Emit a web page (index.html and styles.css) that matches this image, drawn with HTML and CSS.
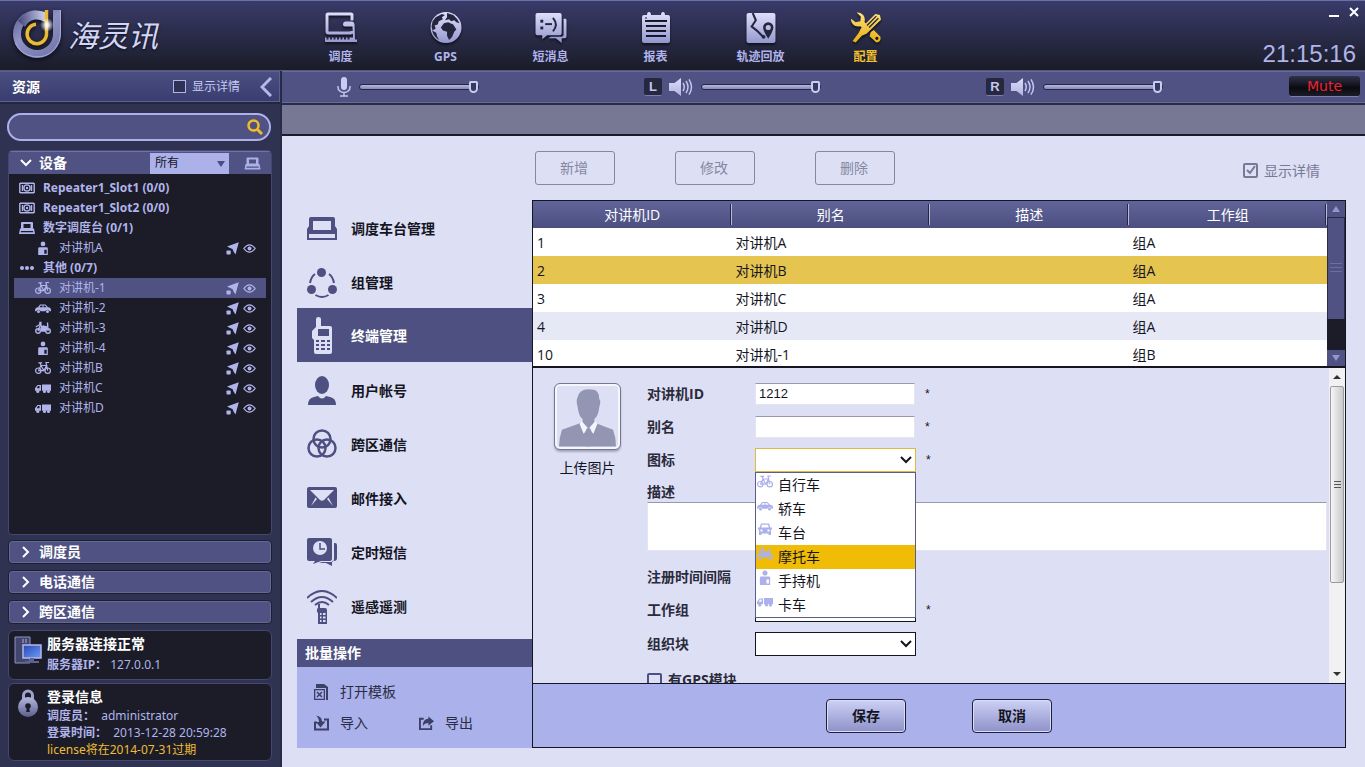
FILE: index.html
```html
<!DOCTYPE html>
<html lang="zh-CN">
<head>
<meta charset="utf-8">
<title>海灵讯</title>
<link rel="stylesheet" href="styles.css">
</head>
<body>
<svg class="sprite" aria-hidden="true">
  <defs>
    <linearGradient id="silver" gradientUnits="userSpaceOnUse" x1="0" y1="0" x2="0" y2="30"><stop offset="0" stop-color="#dfe1fc"/><stop offset="1" stop-color="#9598cf"/></linearGradient>
    <linearGradient id="gold" gradientUnits="userSpaceOnUse" x1="0" y1="0" x2="0" y2="30"><stop offset="0" stop-color="#ffe27a"/><stop offset="1" stop-color="#e8ad14"/></linearGradient>
    <linearGradient id="ring" gradientUnits="userSpaceOnUse" x1="6" y1="2" x2="36" y2="48"><stop offset="0" stop-color="#5d6196"/><stop offset=".45" stop-color="#8f93c4"/><stop offset="1" stop-color="#7377ac"/></linearGradient>
    <linearGradient id="swirl" gradientUnits="userSpaceOnUse" x1="8" y1="14" x2="36" y2="10"><stop offset="0" stop-color="#4a4d80"/><stop offset="1" stop-color="#d9dcf8"/></linearGradient>
    <radialGradient id="spark"><stop offset="0" stop-color="#fff"/><stop offset=".3" stop-color="#fff" stop-opacity=".8"/><stop offset="1" stop-color="#fff" stop-opacity="0"/></radialGradient>
    <linearGradient id="screen" x1="0" y1="0" x2="1" y2="1"><stop offset="0" stop-color="#2446b8"/><stop offset="1" stop-color="#6f9cf5"/></linearGradient>
    <linearGradient id="metal" x1="0" y1="0" x2="0" y2="1"><stop offset="0" stop-color="#b4b7df"/><stop offset="1" stop-color="#5c5f8c"/></linearGradient>
  </defs>
  <symbol id="i-bike" viewBox="0 0 16 14"><g fill="none" stroke="currentColor" stroke-width="1.2"><circle cx="3.3" cy="9.7" r="2.7"/><circle cx="12.7" cy="9.7" r="2.7"/><path d="M3.3 9.7 6 4.5 8.8 9.7H3.3M8.8 9.7 11.6 4.5H6L5 1.8M3.4 1.8h3.8M12.7 9.7 11 1.5h3"/></g></symbol>
  <symbol id="i-car" viewBox="0 0 16 14"><path fill="currentColor" fill-rule="evenodd" d="M0 9.5C0 7.5 1 6.5 3 6.2L5 3.5h5.5L13 6.2c2 .2 3 1.2 3 2.8v1.3h-1.3a2.3 2.3 0 0 0-4.4 0H5.7a2.3 2.3 0 0 0-4.4 0H0zM4.5 6.2h3V4.5H5.7zM8.5 4.5v1.7h3L10 4.5z"/><circle cx="3.5" cy="10.5" r="1.5" fill="currentColor"/><circle cx="12.5" cy="10.5" r="1.5" fill="currentColor"/></symbol>
  <symbol id="i-moto" viewBox="0 0 16 14"><g fill="none" stroke="currentColor" stroke-width="1.4"><circle cx="3" cy="10" r="2.3"/><circle cx="13" cy="10" r="2.3"/><path d="M3 10 5.2 4.5M13 10 12.500 1.500M4.500 2.200 7 6M.8 6l4-2.500"/></g><path fill="currentColor" d="M5.500 6.500 8 4.300l4 1 .5 2-2 3.500H6.200L5.200 8zM4 .8h2.600v3H5z"/></symbol>
  <symbol id="i-person" viewBox="0 0 16 16"><circle cx="8" cy="3.3" r="2.7" fill="currentColor"/><path fill="currentColor" fill-rule="evenodd" d="M2.500 8.500Q2.500 7 4 7h8q1.500 0 1.500 1.500V16h-11zM9.500 10v4.500h2.700V10z"/></symbol>
  <symbol id="i-truck" viewBox="0 0 16 14"><path fill="currentColor" fill-rule="evenodd" d="M7 3.500h9v6.300H7zM2.500 4H6v5.800H0V7.200zM3 5 1.800 7.200h2.700V5z"/><circle cx="2.800" cy="10.500" r="1.600" fill="currentColor"/><circle cx="9.500" cy="10.500" r="1.600" fill="currentColor"/><circle cx="13.500" cy="10.500" r="1.600" fill="currentColor"/></symbol>
  <symbol id="i-van" viewBox="0 0 16 14"><path fill="currentColor" fill-rule="evenodd" d="M4 1h8l1.300 4H15v2h-1v5.500h-2.500V11h-7v1.500H2V7H1V5h1.700zM5 2.300 4.200 5h7.600L11 2.300zM3.500 7v2h2V7zM10.500 7v2h2V7z"/></symbol>
  <symbol id="i-arrow" viewBox="0 0 13 13"><path fill="currentColor" d="M12.800.2 9.500 12.500 7.500 9.500 6.500 7 4 6 1 4.500z"/><rect x=".5" y="8.500" width="4.200" height="4" rx=".7" fill="currentColor"/></symbol>
  <symbol id="i-eye" viewBox="0 0 13 11"><path fill="none" stroke="currentColor" stroke-width="1.200" d="M.8 5.500Q6.500-1.800 12.200 5.500 6.500 12.800.8 5.500z"/><circle cx="6.500" cy="5.500" r="2" fill="currentColor"/></symbol>
  <symbol id="i-repeater" viewBox="0 0 16 12"><path fill="none" stroke="currentColor" stroke-width="1.400" d="M1 1.200h14M1 10.800h14M.8 1v10M15.200 1v10M3.500 3v6M12.500 3v6"/><circle cx="8" cy="6" r="3.100" fill="none" stroke="currentColor" stroke-width="1.400"/><circle cx="8" cy="6" r="1.200" fill="currentColor"/></symbol>
  <symbol id="i-console" viewBox="0 0 16 13"><path fill="currentColor" fill-rule="evenodd" d="M3 .5h10q1 0 1 1V7h1l1 5.500H0L1 7h1V1.500q0-1 1-1zM4.500 2.500v4h7v-4zM2 9.500l-.3 1.300h12.600L14 9.500z"/></symbol>
  <symbol id="i-chev" viewBox="0 0 12 8"><path fill="none" stroke="currentColor" stroke-width="2" d="m1 1 5 5 5-5"/></symbol>
  <symbol id="i-speaker" viewBox="0 0 24 20"><path fill="url(#silver)" d="M0 6h5.500L12 1v18l-6.500-5H0z"/><path fill="none" stroke="#c3c6ee" stroke-width="1.500" d="M14 6q2.500 4 0 8M17 4q4 6 0 12M20 2.300q5 7.700 0 15.400"/></symbol>
</svg>

<header class="topbar">
  <div class="brand">
    <svg class="brand-mark" viewBox="0 0 50 50" aria-hidden="true">
      <path fill="none" stroke="url(#ring)" stroke-width="8" d="M45 1V25A20 20 0 1 1 24 5"/>
      <path fill="url(#swirl)" d="M6 12C14 1 24 0 33 3v10c-7-4-15-4-20 5z"/>
      <path fill="none" stroke="#a8abd6" stroke-width="1" d="M48.500 1v24a23.500 23.500 0 0 1-45 9"/>
      <path fill="none" stroke="#e9b931" stroke-width="3.500" d="M34.500 1v24A9.700 9.700 0 1 1 24 15.300"/>
      <circle cx="35" cy="16" r="7" fill="url(#spark)"/>
    </svg>
    <span class="brand-name">海灵讯</span>
  </div>
  <nav class="nav">
    <a class="nav-item" href="#dispatch"><svg class="nav-icon" viewBox="0 0 32 30"><g fill="none" stroke="url(#silver)" stroke-width="3"><path d="M27 8V2.500Q27 1.500 26 1.500H3Q2 1.500 2 2.500V19q0 1.500 1.500 1.500h22q1.500 0 1.500-2"/></g><path fill="url(#silver)" d="M18 12q0-3 3-3h6q2 0 2.500 3L30 27h2v2.500H0V25h1.500v2h2v-2H5v2h2v-2h1.500v2h2v-2H12v2h2v-2h1.500v2h2v-2H19v2h2v-2h1.500v2h2v-2H28l-.5-11H21q-3 0-3-2z"/></svg>调度</a>
    <a class="nav-item" href="#gps"><svg class="nav-icon" viewBox="0 0 30 30"><circle cx="15" cy="15" r="15" fill="url(#silver)"/><g fill="#24263e"><path d="M2 9 5 5l6-3 3 1-3 2 1 2-4 2-1 3-3 1 1 3-3 2-1-4zM1.500 18l4 2 1 4 2 3q-5-2-7-9zM16 1l6 2 4 4 2 4-3-1-2-2-3 1-2-2-4 1 2-3zM13 11l4-1 5 2 3 5-2 2-2 5-3 3-2-4v-4l-4-1-2-3z"/></g></svg>GPS</a>
    <a class="nav-item" href="#sms"><svg class="nav-icon" viewBox="0 0 32 32"><path fill="url(#silver)" d="M2 1h23q2 0 2 2v19q0 2-2 2H12l-5 4v-4H2q-2 0-2-2V3q0-2 2-2zM29 7h1.500q1.500 0 1.500 1.500V25q0 2-2 2h-3v5l-6-5h-8l3-1.500h11q2 0 2-2z"/><g fill="#24263e"><rect x="5" y="8" width="3" height="3"/><rect x="5" y="15" width="3" height="3"/><rect x="10" y="11.500" width="7" height="2"/></g><path fill="none" stroke="#24263e" stroke-width="2" d="M18 6q6 7 0 14"/></svg>短消息</a>
    <a class="nav-item" href="#report"><svg class="nav-icon" viewBox="0 0 28 31"><path fill="url(#silver)" fill-rule="evenodd" d="M2 3h3q0-3 2-3t2 3h10q0-3 2-3t2 3h3q2 0 2 2v24q0 2-2 2H2q-2 0-2-2V5q0-2 2-2zM3 10h22V8H3zM3 6.500h2v-1H3zM4 13v2h20v-2zM4 18v2h20v-2zM4 23v2h20v-2z"/></svg>报表</a>
    <a class="nav-item" href="#track"><svg class="nav-icon" viewBox="0 0 28 30"><rect width="28" height="29" y="1" rx="2" fill="url(#silver)"/><path fill="none" stroke="#24263e" stroke-width="2" d="M6 1l3 7-4 6 5 4 6 6"/><circle cx="16.500" cy="24" r="1.800" fill="#24263e"/><path fill="#24263e" fill-rule="evenodd" d="M21 26q-5-8-5-11a5 5 0 0 1 10 0q0 3-5 11zM21 12.500a2.500 2.500 0 1 0 0 5 2.500 2.500 0 0 0 0-5z"/></svg>轨迹回放</a>
    <a class="nav-item nav-item--active" href="#config" aria-current="page"><svg class="nav-icon" viewBox="0 0 30 30"><path fill="url(#gold)" d="M6 .5a7 7 0 0 1 7.500 9.200l5 5-4 4-5-5A7 7 0 0 1 .5 6.500L5 10l4.500-1 .5-4.500z"/><path fill="url(#gold)" d="m24 2 4.500 1 1 4.500L15.500 21 11 23 5 29.500 2 28 8 20l2-4z"/><path stroke="#24263e" stroke-width="1.300" d="m16 13 9-9M18 15l9-9"/><path fill="url(#gold)" fill-rule="evenodd" d="m19.500 19.500 3-2 6.500 6.500q1 5-4 5.500l-6.500-6zM25.500 24a1.500 1.500 0 1 0 .1 0z"/></svg>配置</a>
  </nav>
  <div class="top-right">
    <div class="win-buttons">
      <button class="win-btn" aria-label="最小化"><svg viewBox="0 0 10 10"><path d="M0 9h10" stroke="#fff" stroke-width="2"/></svg></button>
      <button class="win-btn" aria-label="关闭"><svg viewBox="0 0 10 10"><path d="m1 1 8 8M9 1 1 9" stroke="#fff" stroke-width="2"/></svg></button>
    </div>
    <time class="clock">21:15:16</time>
  </div>
</header>

<div class="shell">
  <aside class="sidebar">
    <div class="side-head">
      <h2 class="side-title">资源</h2>
      <label class="check"><input class="check-box check-box--dark" type="checkbox">显示详情</label>
      <button class="collapse" aria-label="收起"><svg viewBox="0 0 12 20"><path d="M11 1 2 10l9 9" fill="none" stroke="#b4b8ee" stroke-width="3"/></svg></button>
    </div>
    <div class="side-body">
      <div class="search">
        <input class="search-input" type="search" aria-label="搜索">
        <button class="search-btn" aria-label="搜索"><svg viewBox="0 0 16 16"><circle cx="6.500" cy="6.500" r="5" fill="none" stroke="#f0bb2b" stroke-width="2.500"/><path d="m10 10 5 5" stroke="#f0bb2b" stroke-width="3"/></svg></button>
      </div>
      <section class="devices">
        <div class="dev-head">
          <svg class="chev" ><use href="#i-chev"/></svg>
          <h3 class="dev-title">设备</h3>
          <div class="filter"><select class="filter-select" aria-label="筛选"><option>所有</option></select><span class="filter-arrow"></span></div>
          <button class="dev-console" aria-label="调度台"><svg><use href="#i-console"/></svg></button>
        </div>
        <ul class="tree">
          <li class="node node--group"><svg class="node-icon"><use href="#i-repeater"/></svg>Repeater1_Slot1 (0/0)</li>
          <li class="node node--group"><svg class="node-icon"><use href="#i-repeater"/></svg>Repeater1_Slot2 (0/0)</li>
          <li class="node node--group"><svg class="node-icon"><use href="#i-console"/></svg>数字调度台 (0/1)</li>
          <li class="node"><svg class="node-icon"><use href="#i-person"/></svg><span class="node-name">对讲机A</span><svg class="act"><use href="#i-arrow"/></svg><svg class="act"><use href="#i-eye"/></svg></li>
          <li class="node node--group"><svg class="node-icon" viewBox="0 0 16 14"><g fill="currentColor"><circle cx="3" cy="7" r="2"/><circle cx="8" cy="7" r="2"/><circle cx="13" cy="7" r="2"/></g></svg>其他 (0/7)</li>
          <li class="node node--selected"><svg class="node-icon"><use href="#i-bike"/></svg><span class="node-name">对讲机-1</span><svg class="act"><use href="#i-arrow"/></svg><svg class="act"><use href="#i-eye"/></svg></li>
          <li class="node"><svg class="node-icon"><use href="#i-car"/></svg><span class="node-name">对讲机-2</span><svg class="act"><use href="#i-arrow"/></svg><svg class="act"><use href="#i-eye"/></svg></li>
          <li class="node"><svg class="node-icon"><use href="#i-moto"/></svg><span class="node-name">对讲机-3</span><svg class="act"><use href="#i-arrow"/></svg><svg class="act"><use href="#i-eye"/></svg></li>
          <li class="node"><svg class="node-icon"><use href="#i-person"/></svg><span class="node-name">对讲机-4</span><svg class="act"><use href="#i-arrow"/></svg><svg class="act"><use href="#i-eye"/></svg></li>
          <li class="node"><svg class="node-icon"><use href="#i-bike"/></svg><span class="node-name">对讲机B</span><svg class="act"><use href="#i-arrow"/></svg><svg class="act"><use href="#i-eye"/></svg></li>
          <li class="node"><svg class="node-icon"><use href="#i-truck"/></svg><span class="node-name">对讲机C</span><svg class="act"><use href="#i-arrow"/></svg><svg class="act"><use href="#i-eye"/></svg></li>
          <li class="node"><svg class="node-icon"><use href="#i-truck"/></svg><span class="node-name">对讲机D</span><svg class="act"><use href="#i-arrow"/></svg><svg class="act"><use href="#i-eye"/></svg></li>
        </ul>
      </section>
      <button class="fold"><svg viewBox="0 0 8 12"><path d="m1 1 5 5-5 5" fill="none" stroke="#fff" stroke-width="2"/></svg>调度员</button>
      <button class="fold"><svg viewBox="0 0 8 12"><path d="m1 1 5 5-5 5" fill="none" stroke="#fff" stroke-width="2"/></svg>电话通信</button>
      <button class="fold"><svg viewBox="0 0 8 12"><path d="m1 1 5 5-5 5" fill="none" stroke="#fff" stroke-width="2"/></svg>跨区通信</button>
      <section class="info info--server">
        <svg class="info-icon" viewBox="0 0 28 28"><path d="M1 1h15v26H1z" fill="#42466f" stroke="#8d91c4"/><path d="M8 4h6M8 6h6" stroke="#a7abd9" stroke-dasharray="2 1"/><rect x="9" y="9" width="18" height="13" fill="url(#screen)" stroke="#b4b8e6" stroke-width="1.500"/><path d="M16 22h4v3h5v2H11v-2h5z" fill="#5e628e"/></svg>
        <div><h3 class="info-title">服务器连接正常</h3><p class="info-line"><b>服务器IP：</b> 127.0.0.1</p></div>
      </section>
      <section class="info">
        <svg class="info-icon" viewBox="0 0 28 30"><path d="M9.500 14V7.500a4.500 4.500 0 0 1 9 0V14" fill="none" stroke="#9da1cf" stroke-width="3"/><circle cx="14" cy="19" r="10" fill="url(#metal)"/><circle cx="14" cy="18" r="2.800" fill="#1b1c28"/><path d="m13 18-.8 6h3.600L15 18z" fill="#1b1c28"/></svg>
        <div><h3 class="info-title">登录信息</h3><p class="info-line"><b>调度员：</b>&nbsp; administrator</p><p class="info-line"><b>登录时间：</b>&nbsp; 2013-12-28 20:59:28</p><p class="info-line info-line--warn">license将在2014-07-31过期</p></div>
      </section>
    </div>
  </aside>

  <main class="main">
    <div class="audio">
      <div class="channel"><span class="channel-icons"><svg class="mic" viewBox="0 0 14 20"><rect x="4" y="0" width="6" height="13" rx="3" fill="#c9ccf2"/><path d="M1 9v1.500a6 5 0 0 0 12 0V9M7 15.500V19M3 19h8" fill="none" stroke="#c3c6ee" stroke-width="1.500"/></svg></span><input class="slider" type="range" value="100" aria-label="麦克风音量"></div>
      <div class="channel"><span class="channel-icons"><span class="badge">L</span><svg class="speaker"><use href="#i-speaker"/></svg></span><input class="slider" type="range" value="100" aria-label="左声道音量"></div>
      <div class="channel"><span class="channel-icons"><span class="badge">R</span><svg class="speaker"><use href="#i-speaker"/></svg></span><input class="slider" type="range" value="100" aria-label="右声道音量"></div>
      <button class="mute">Mute</button>
    </div>
    <div class="strip"></div>
    <div class="content">
      <div class="toolbar">
        <button class="tool">新增</button><button class="tool">修改</button><button class="tool">删除</button>
        <label class="check check--light"><input class="check-box check-box--light" type="checkbox" checked>显示详情</label>
      </div>
      <div class="menu-col">
        <nav class="menu">
          <a class="menu-item" href="#m1"><svg class="menu-icon" viewBox="0 0 30 34"><path fill="currentColor" fill-rule="evenodd" d="M4 5h22q2 0 2 2v7l2 3v11H0V17l2-3V7q0-2 2-2zM6 9v9h18V9zM2 22v4h26v-4z"/></svg>调度车台管理</a>
          <a class="menu-item" href="#m2"><svg class="menu-icon" viewBox="0 0 30 34"><g fill="currentColor"><circle cx="14.500" cy="6.500" r="4.500"/><circle cx="4.500" cy="23.500" r="4.500"/><circle cx="25.500" cy="23.500" r="4.500"/></g><g fill="none" stroke="currentColor" stroke-width="2"><path d="M3 17q1-6 5-9M27 17q-1-6-5-9M8.500 29q6.500 4 13 0"/></g></svg>组管理</a>
          <a class="menu-item menu-item--active" href="#m3" aria-current="page"><svg class="menu-icon menu-icon--tall" viewBox="0 0 30 38"><path fill="currentColor" fill-rule="evenodd" d="M9 2q0-2 2.500-2T14 2v7h9q2 0 2 2v24q0 2-2 2H9q-2 0-2-2V23l-2-2v-7l2-2 2-2zM11 12v7h11v-7zM9 23v2h3v-2zM14 23v2h4v-2zM20 23v2h3v-2zM9 27v2h3v-2zM14 27v2h4v-2zM20 27v2h3v-2zM9 31v2h3v-2zM14 31v2h4v-2zM20 31v2h3v-2z"/></svg>终端管理</a>
          <a class="menu-item" href="#m4"><svg class="menu-icon" viewBox="0 0 30 34"><ellipse cx="15" cy="11" rx="7" ry="9" fill="currentColor"/><path fill="currentColor" d="M1 31q0-7 6-8l4-1q4 5 8 0l4 1q6 1 6 8z"/></svg>用户帐号</a>
          <a class="menu-item" href="#m5"><svg class="menu-icon" viewBox="0 0 30 34"><g fill="none" stroke="currentColor" stroke-width="2.500"><circle cx="15" cy="11" r="8.500"/><circle cx="10" cy="20" r="8.500"/><circle cx="20" cy="20" r="8.500"/></g></svg>跨区通信</a>
          <a class="menu-item" href="#m6"><svg class="menu-icon" viewBox="0 0 30 34"><rect y="5" width="30" height="21" rx="2" fill="currentColor"/><path fill="#dddff5" d="M3 8h24L17 18q-2 1.500-4 0zM8.500 15.500l1.500 1.500-6 7zM21.500 15.500 20 17l6 7z"/></svg>邮件接入</a>
          <a class="menu-item" href="#m7"><svg class="menu-icon" viewBox="0 0 30 34"><path fill="currentColor" d="M2 2h21q2 0 2 2v19q0 2-2 2h-9l-8 3 2-3H2q-2 0-2-2V4q0-2 2-2zM27 7h1q2 0 2 2v13q0 3-3 3h-2v5l-6-3h-7l3-1h9q3 0 3-3z"/><circle cx="13" cy="12" r="7" fill="#dddff5"/><path d="M13 7v6h5" fill="none" stroke="currentColor" stroke-width="1.500"/></svg>定时短信</a>
          <a class="menu-item" href="#m8"><svg class="menu-icon" viewBox="0 0 30 34"><g fill="none" stroke="currentColor" stroke-width="2"><path d="M0 8q15-14 30 0M4 12q11-10 22 0M8 15q7-6 14 0"/></g><path fill="currentColor" fill-rule="evenodd" d="M11 14h2v4h5q2 0 2 2v14h-9V23l-1-1v-3l1-1zM13 23v2h1.500v-2zM16 23v2h2.500v-2zM13 26.500v2h1.500v-2zM16 26.500v2h2.500v-2zM13 30v2h1.500v-2zM16 30v2h2.500v-2z"/></svg>遥感遥测</a>
        </nav>
        <section class="batch">
          <h3 class="batch-title">批量操作</h3>
          <div class="batch-body">
            <a class="batch-link batch-link--wide" href="#tpl"><svg viewBox="0 0 15 16"><path fill="#3c3f66" fill-rule="evenodd" d="M2 0h8l4 3v13h-2V4H2zM0 5h11v11H0zM1.300 6.300v8.400h8.400V6.300z"/><path d="m3 8 5 5M8 8l-5 5" stroke="#3c3f66" stroke-width="1.500"/></svg>打开模板</a>
            <a class="batch-link" href="#in"><svg viewBox="0 0 15 15"><path fill="none" stroke="#3c3f66" stroke-width="2" d="M3 7H1v7h13V4h-4"/><path fill="#3c3f66" d="M2 0q6 1 6 6h3.500L6.500 12 2 6.500h3q0-4-3-6.500z"/></svg>导入</a>
            <a class="batch-link" href="#out"><svg viewBox="0 0 16 15"><path fill="none" stroke="#3c3f66" stroke-width="2" d="M5 3H1v11h12v-4"/><path fill="#3c3f66" d="M4 11q0-8 6-8V.5l6 5-6 5V7.500Q6 7.500 4 11z"/></svg>导出</a>
          </div>
        </section>
      </div>
      <div class="panel">
        <div class="grid-wrap">
          <table class="grid">
            <thead><tr><th>对讲机ID</th><th>别名</th><th>描述</th><th>工作组</th></tr></thead>
            <tbody>
              <tr><td>1</td><td>对讲机A</td><td></td><td>组A</td></tr>
              <tr class="row--selected"><td>2</td><td>对讲机B</td><td></td><td>组A</td></tr>
              <tr><td>3</td><td>对讲机C</td><td></td><td>组A</td></tr>
              <tr class="row--alt"><td>4</td><td>对讲机D</td><td></td><td>组A</td></tr>
              <tr><td>10</td><td>对讲机-1</td><td></td><td>组B</td></tr>
            </tbody>
          </table>
          <div class="bar bar--dark" aria-hidden="true"><span class="bar-end"><i class="tri tri--up"></i></span><span class="bar-thumb"><i class="grip"></i></span><span class="bar-gap"></span><span class="bar-end"><i class="tri tri--down"></i></span></div>
        </div>
        <div class="form-wrap">
          <form class="form" id="terminal">
            <div class="photo">
              <svg class="photo-img" viewBox="0 0 60 60"><path fill="#9396b3" d="M20 10q2-9 13-8 9-1 9 10 2 1 0 8-1 9-5 12v4l-6 9-6-9v-4q-4-3-5-12-2-7 0-10z"/><path fill="#9396b3" d="M23 36 4 43Q1 52 1 60h58q0-9-3-17l-18-7-7 8z"/><path fill="#f3f4fc" d="m24 34 7 8-5 5-4-10zM38 34l-7 8 5 5 4-10z"/><path fill="#9396b3" d="m29 42 2-1 2 1 2 5-3 13h-3l-2-13z"/></svg>
              <span>上传图片</span>
            </div>
            <div class="fields">
              <div class="field"><label class="field-label" for="f-id">对讲机ID</label><input class="text" id="f-id" value="1212"><span class="star">*</span></div>
              <div class="field"><label class="field-label" for="f-name">别名</label><input class="text" id="f-name"><span class="star">*</span></div>
              <div class="field"><label class="field-label" for="f-icon">图标</label>
                <div class="pick pick--open"><select class="pick-select" id="f-icon"><option></option></select><svg class="pick-arrow"><use href="#i-chev"/></svg>
                  <ul class="options" role="listbox">
                    <li class="option" role="option"><svg><use href="#i-bike"/></svg>自行车</li>
                    <li class="option" role="option"><svg><use href="#i-car"/></svg>轿车</li>
                    <li class="option" role="option"><svg><use href="#i-van"/></svg>车台</li>
                    <li class="option option--active" role="option" aria-selected="true"><svg><use href="#i-moto"/></svg>摩托车</li>
                    <li class="option" role="option"><svg><use href="#i-person"/></svg>手持机</li>
                    <li class="option" role="option"><svg><use href="#i-truck"/></svg>卡车</li>
                  </ul>
                </div><span class="star">*</span></div>
              <div class="field field--area"><label class="field-label" for="f-desc">描述</label><textarea class="area" id="f-desc"></textarea></div>
              <div class="field"><label class="field-label" for="f-int">注册时间间隔</label><input class="text" id="f-int"></div>
              <div class="field"><label class="field-label" for="f-grp">工作组</label><div class="pick"><select class="pick-select" id="f-grp"><option></option></select><svg class="pick-arrow"><use href="#i-chev"/></svg></div><span class="star">*</span></div>
              <div class="field field--tall"><label class="field-label" for="f-blk">组织块</label><div class="pick"><select class="pick-select" id="f-blk"><option></option></select><svg class="pick-arrow"><use href="#i-chev"/></svg></div></div>
              <label class="field field--tall gps"><input class="check-box check-box--gps" type="checkbox">有GPS模块</label>
            </div>
          </form>
          <div class="bar bar--light" aria-hidden="true"><span class="bar-end"><i class="tri tri--up"></i></span><span class="bar-thumb"><i class="grip"></i></span><span class="bar-gap"></span><span class="bar-end"><i class="tri tri--down"></i></span></div>
        </div>
        <div class="actions"><button class="btn" form="terminal" type="submit">保存</button><button class="btn" type="button">取消</button></div>
      </div>
    </div>
  </main>
</div>
</body>
</html>
```
FILE: styles.css
```css
* { box-sizing: border-box; margin: 0; padding: 0; }
body {
  font: 14px/20px "Open Sans", "Noto Sans CJK SC", sans-serif;
  color: #14151f;
  height: 100vh;
  display: flex;
  flex-direction: column;
  overflow: hidden;
  background: #dddff5;
}
button, input, select, textarea { font: inherit; color: inherit; }
button { border: 0; background: none; cursor: pointer; }
a { color: inherit; text-decoration: none; }
ul { list-style: none; }
svg { display: block; flex: none; }
.sprite { position: absolute; width: 0; height: 0; }

/* top bar */
.topbar {
  height: 71px;
  flex: none;
  display: flex;
  border-top: 1px solid #6c70a8;
  border-bottom: 1px solid #55587f;
  background: linear-gradient(#393b6a, #1a1c28);
  color: #b0b4ea;
}
.brand { width: 288px; padding: 8px 0 0 12px; display: flex; gap: 6px; flex: none; }
.brand-mark { width: 50px; height: 50px; filter: drop-shadow(0 2px 2px #0c0d16); }
.brand-name { font: italic 400 30px/50px "Noto Sans CJK SC", sans-serif; color: #d3d6f6; text-shadow: 0 1px 2px #0c0d16; }
.nav { display: flex; }
.nav-item { width: 105px; padding-top: 11px; display: flex; flex-direction: column; align-items: center; gap: 4px; font-size: 12px; line-height: 20px; font-weight: 700; }
.nav-item--active { color: #f2c12e; }
.nav-icon { width: 32px; height: 31px; filter: drop-shadow(0 2px 1px #11121d); }
.top-right { margin-left: auto; padding: 6px 6px 0 0; display: flex; flex-direction: column; align-items: flex-end; gap: 21px; }
.win-buttons { display: flex; gap: 10px; }
.win-btn { width: 10px; height: 10px; }
.clock { font: 24px/32px "Liberation Sans", sans-serif; padding-right: 3px; }

.shell { flex: 1; min-height: 0; display: flex; }

/* sidebar */
.sidebar { width: 282px; flex: none; display: flex; flex-direction: column; background: #2f3251; border-right: 2px solid #292b46; color: #b0b4ea; }
.side-head { height: 31px; display: flex; align-items: center; padding: 0 7px 0 12px; background: linear-gradient(#4b4e80, #3a3d6f); border: 1px solid #5b5f92; border-left: 0; }
.side-title { font-size: 14px; color: #fff; flex: 1; }
.check { display: flex; align-items: center; gap: 6px; font-size: 12px; color: #c6c9f4; }
.check-box { appearance: none; width: 13px; height: 13px; }
.check-box--dark { border: 1px solid #b0b4ea; background: #2f3251; }
.collapse { width: 12px; height: 20px; margin-left: 20px; }
.side-body { flex: 1; min-height: 0; display: flex; flex-direction: column; padding: 9px 8px 6px; border-top: 2px solid #24263c; }
.search { height: 28px; margin: 0 1px 9px -1px; display: flex; align-items: center; padding: 0 6px 0 12px; border: 2px solid #adb1ea; border-radius: 14px; background: #4f5282; }
.search-input { flex: 1; min-width: 0; border: 0; outline: 0; background: none; }
.search-btn { width: 16px; height: 16px; }
.devices { flex: 1; min-height: 0; background: #1b1c28; border: 1px solid #44476f; border-radius: 4px; overflow: hidden; margin-bottom: 5px; }
.dev-head { height: 23px; display: flex; align-items: center; padding-left: 11px; background: #4f5282; border-top: 1px solid #6f73a5; }
.chev { width: 12px; height: 8px; color: #fff; }
.dev-title { font-size: 14px; color: #fff; flex: 1; padding-left: 7px; }
.filter { position: relative; }
.filter-select { appearance: none; display: block; width: 79px; height: 21px; padding-left: 5px; border: 0; background: #acb1ea; color: #14151f; font-size: 12px; line-height: 20px; }
.filter-arrow { position: absolute; right: 4px; top: 8px; border: 4px solid transparent; border-top: 6px solid #4a4d80; border-bottom: 0; }
.dev-console { margin: 0 10px 0 15px; }
.dev-console svg { width: 17px; height: 13px; color: #acb1ea; }
.tree { padding: 4px 5px; font-family: "Noto Sans", "Noto Sans CJK SC", sans-serif; font-size: 12px; }
.node { height: 20px; display: flex; align-items: center; gap: 8px; padding: 0 10px 0 21px; }
.node-name { flex: 1; }
.node--group { padding-left: 5px; font-weight: 700; }
.node--selected { background: #4f5282; }
.node-icon { width: 16px; height: 14px; }
.act { width: 13px; height: 13px; }
.act + .act { margin-left: -4px; }
.fold { height: 24px; flex: none; display: flex; align-items: center; gap: 9px; padding-left: 13px; margin-bottom: 6px; border: 1px solid #1d1e30; border-radius: 4px; background: #4f5282; box-shadow: inset 0 0 0 1px #646894; color: #fff; font-weight: 700; }
.fold svg { width: 8px; height: 12px; }
.info { min-height: 78px; flex: none; display: flex; gap: 5px; padding: 3px 5px 2px; border: 1px solid #44476f; border-radius: 6px; background: #1b1c28; font-family: "Noto Sans", "Noto Sans CJK SC", sans-serif; font-size: 12px; }
.info--server { min-height: 50px; margin-bottom: 3px; }
.info-icon { width: 28px; height: 30px; margin-top: 1px; }
.info-title { font-size: 14px; line-height: 20px; color: #fff; }
.info-line { line-height: 17px; }
.info--server .info-line { line-height: 22px; }
.info-line--warn { color: #eebc35; }

/* audio bar */
.main { flex: 1; min-width: 0; display: flex; flex-direction: column; }
.audio { height: 32px; flex: none; display: grid; grid-template-columns: 342fr 342fr 303fr 71px; align-items: center; padding: 0 5px 1px 20px; background: #4f5282; border-top: 1px solid #686b9a; border-bottom: 1px solid #686b9a; }
.channel { display: flex; align-items: center; gap: 8px; }
.channel-icons { width: 49px; display: flex; align-items: center; justify-content: flex-end; gap: 7px; }
.mic { width: 14px; height: 20px; }
.speaker { width: 24px; height: 20px; }
.badge { width: 18px; height: 18px; border-radius: 2px; background: #26283f; border-bottom: 1px solid #7c7fae; font: 700 13px/18px "Liberation Sans", sans-serif; color: #c3c6ee; text-align: center; }
.slider { appearance: none; width: 120px; height: 14px; background: none; }
.slider::-webkit-slider-runnable-track { height: 6px; border-radius: 3px; border: 1px solid #25273d; background: linear-gradient(#b5b8e4, #8588b8); }
.slider::-webkit-slider-thumb { appearance: none; width: 9px; height: 12px; margin-top: -4px; border: 2px solid #c9ccf2; border-radius: 2px 2px 5px 5px; background: #373a60; }
.mute { height: 21px; border-radius: 3px; background: linear-gradient(#30324a, #0a0a10 60%, #1b1c28); border-bottom: 1px solid #7c7fae; font: 14px/18px "DejaVu Sans", sans-serif; color: #f0222e; }
.strip { height: 33px; flex: none; border-top: 2px solid #2a2c45; border-bottom: 2px solid #1b1c30; background: #767894; }

/* content */
.content { flex: 1; min-height: 0; display: grid; grid-template: 64px 1fr / 235px 1fr; padding: 0 19px 19px 15px; }
.toolbar { grid-column: 2; display: flex; align-items: center; gap: 60px; padding: 0 26px 0 3px; color: #8587a3; }
.tool { width: 80px; height: 34px; padding-right: 2px; border: 1px solid #8587a3; border-radius: 3px; }
.check--light { margin-left: auto; font-size: 14px; padding-top: 5px; color: #777997; }
.check-box--light { width: 15px; height: 15px; border: 2px solid #777997; border-radius: 2px; background: url("data:image/svg+xml,%3Csvg xmlns='http://www.w3.org/2000/svg' viewBox='0 0 11 11'%3E%3Cpath d='M2 5l3 3 5-7' fill='none' stroke='%23777997' stroke-width='2'/%3E%3C/svg%3E"); }
.menu-col { display: flex; flex-direction: column; justify-content: space-between; min-height: 0; }
.menu-item { height: 54px; display: flex; align-items: center; gap: 14px; padding: 4px 0 0 10px; font-weight: 700; }
.menu-icon { width: 30px; height: 34px; color: #4d5080; }
.menu-icon--tall { height: 38px; color: #dddff5; }
.menu-item--active { padding-top: 2px; background: #4d5080; color: #fff; }
.batch-title { padding: 4px 8px; font-size: 14px; background: #4d5080; color: #fff; }
.batch-body { height: 81px; padding: 10px 17px; display: grid; grid-template-columns: 105px 1fr; background: #abb1ea; color: #2a2c45; }
.batch-link { display: flex; align-items: center; gap: 11px; }
.batch-link--wide { grid-column: 1 / 3; }
.batch-link svg { width: 15px; height: 16px; }

.panel { min-width: 0; min-height: 0; display: flex; flex-direction: column; border: 1px solid #14151f; }
.grid-wrap { height: 167px; flex: none; display: flex; overflow: hidden; border-bottom: 2px solid #14151f; background: #fff; }
.grid { flex: 1; width: 100%; border-collapse: collapse; table-layout: fixed; align-self: flex-start; }
.grid th { height: 27px; font-weight: 400; color: #fff; background: linear-gradient(90deg, #25273d 50%, #b5b8e4 50%) right / 2px 21px no-repeat, linear-gradient(#62659a, #4b4e7e); }
.grid td { height: 28px; padding: 2px 4px 0; }
.row--selected { background: #e5c44f; }
.row--alt { background: #e6e8f6; }

.bar { flex: none; display: flex; flex-direction: column; }
.bar-end { height: 16px; display: grid; place-items: center; }
.bar-thumb { display: grid; place-items: center; }
.bar-gap { flex: 1; }
.tri { border: 4px solid transparent; }
.tri--up { border-top: 0; border-bottom: 6px solid #9195cc; }
.tri--down { border-bottom: 0; border-top: 6px solid #9195cc; }
.grip { width: 12px; height: 11px; background: repeating-linear-gradient(#6b6fa0 0 1px, transparent 1px 4px); }
.bar--dark { width: 18px; background: #1b1c28; }
.bar--dark .bar-end { background: #4f5282; }
.bar--dark .bar-thumb { height: 62%; border: 1px solid #2a2c45; border-bottom: 0; background: #4f5282; }
.bar--light { width: 16px; background: #f1f1f3; }
.bar--light .bar-end { height: 18px; }
.bar--light .bar-thumb { height: 197px; margin: 0 1px; border: 1px solid #9a9aa0; border-radius: 2px; background: linear-gradient(90deg, #f6f6f6, #c9c9cc); }
.bar--light .tri--up { border-bottom: 4px solid #333; }
.bar--light .tri--down { border-top: 4px solid #333; }
.bar--light .grip { width: 7px; height: 8px; background: repeating-linear-gradient(#55565c 0 1px, transparent 1px 3px); }

/* form */
.form-wrap { flex: 1; min-height: 0; display: flex; overflow: hidden; }
.form { flex: 1; min-width: 0; display: flex; gap: 26px; padding: 9px 2px 0 21px; }
.photo { width: 67px; flex: none; padding-top: 6px; text-align: center; white-space: nowrap; }
.photo-img { width: 67px; height: 67px; margin-bottom: 8px; padding: 3px 3px 2px; border: 1px solid #75778f; border-radius: 6px; background: #dddff5; box-shadow: inset 0 0 0 2px #f6f7fe, 0 2px 2px #a5a7be; }
.fields { flex: 1; min-width: 0; }
.field { display: flex; align-items: center; min-height: 33px; }
.field-label { width: 108px; font-weight: 700; color: #2a2b3b; }
.text { width: 160px; height: 22px; padding: 0 3px; border: 1px solid #e4e5f0; border-top-color: #9799b3; background: #fff; font-family: "Liberation Sans", sans-serif; font-size: 13px; }
.star { margin-left: 10px; font: 12px/20px "Liberation Sans", sans-serif; }
.field--area { flex-direction: column; align-items: flex-start; padding: 6px 0 9px; }
.area { width: 100%; height: 49px; resize: none; border: 1px solid #e4e5f0; border-top-color: #9799b3; background: #fff; }
.field--tall { min-height: 36px; }
.pick { position: relative; width: 161px; }
.pick-select { appearance: none; display: block; width: 100%; height: 24px; border: 1px solid #14151f; background: #fff; }
.pick--open .pick-select { border-color: #dfb93c; }
.pick-arrow { position: absolute; right: 4px; top: 8px; width: 12px; height: 8px; }
.options { position: absolute; z-index: 1; top: 24px; left: 0; width: 100%; border: 1px solid #5b5e84; background: #fff; }
.option { height: 24px; display: flex; align-items: flex-start; gap: 5px; padding-left: 1px; line-height: 24px; }
.option svg { width: 16px; height: 15px; margin-top: 1px; color: #acb1ea; }
.option--active { background: #f0bc05; }
.gps { gap: 6px; font-weight: 700; color: #2a2b3b; }
.check-box--gps { width: 15px; height: 15px; border: 2px solid #4d5080; border-radius: 2px; }
.actions { height: 64px; flex: none; display: flex; align-items: center; justify-content: center; gap: 66px; background: #abb1ea; border-top: 1px solid #14151f; }
.btn { width: 80px; height: 34px; border: 1px solid #1f2138; border-radius: 4px; background: linear-gradient(#cdd1f6, #8d91c8); box-shadow: inset 0 0 0 1px #d9dcfa; font-weight: 700; }
```
